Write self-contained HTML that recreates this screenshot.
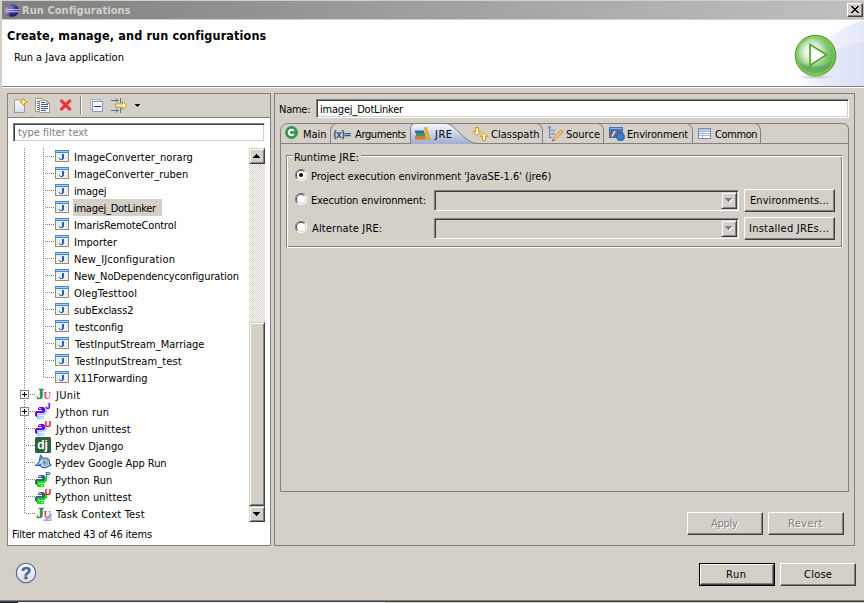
<!DOCTYPE html>
<html><head><meta charset="utf-8"><title>Run Configurations</title>
<style>
*{box-sizing:border-box;margin:0;padding:0}
html,body{width:864px;height:603px;overflow:hidden}
body{background:#d4d0c8;font-family:"DejaVu Sans Condensed","Liberation Sans",sans-serif;font-size:11px;color:#000;position:relative;line-height:13px}
.a{position:absolute}
.t{position:absolute;white-space:nowrap;line-height:13px;height:13px}
#titlebar{left:2px;top:1px;width:862px;height:18px;background:linear-gradient(to right,#808080,#c0c0c0)}
#closebtn{left:847px;top:3px;width:16px;height:14px;background:#d4d0c8;border:1px solid;border-color:#fff #404040 #404040 #fff;box-shadow:inset -1px -1px 0 #808080}
#header{left:2px;top:19px;width:862px;height:67px;background:#fff;overflow:hidden}
#hsep1{left:2px;top:86px;width:862px;height:1px;background:#808080}
#hsep2{left:2px;top:87px;width:862px;height:1px;background:#fff}
.panel{border:1px solid #808080}
#lp{left:7px;top:93px;width:264px;height:453px;background:#fff}
#ltb{left:8px;top:94px;width:262px;height:23px;background:#d4d0c8}
#ltbline{left:8px;top:117px;width:262px;height:1px;background:#808080}
#rp{left:274px;top:93px;width:581px;height:453px}
.sunken{border:1px solid;border-color:#808080 #fff #fff #808080;box-shadow:inset 1px 1px 0 #404040,inset -1px -1px 0 #d4d0c8}
.btn{position:absolute;background:#d4d0c8;border:1px solid;border-color:#fff #404040 #404040 #fff;box-shadow:inset -1px -1px 0 #808080;text-align:center;line-height:19px;white-space:nowrap}
.hl{position:absolute;height:1px;background-image:linear-gradient(to right,#808080 50%,transparent 50%);background-size:2px 1px}
.vl{position:absolute;width:1px;background-image:linear-gradient(to bottom,#808080 50%,transparent 50%);background-size:1px 2px}
</style></head><body>
<!-- title bar -->
<div class="a" id="titlebar"></div>
<svg class="a" style="left:5px;top:4px" width="14" height="13" viewBox="0 0 14 13"><defs><radialGradient id="eg" cx="0.38" cy="0.28" r="0.8"><stop offset="0" stop-color="#8c80cc"/><stop offset="0.55" stop-color="#2e2c84"/><stop offset="1" stop-color="#18165c"/></radialGradient><linearGradient id="ep" x1="0" y1="0" x2="1" y2="0"><stop offset="0" stop-color="#e8a0dc" stop-opacity=".95"/><stop offset="0.22" stop-color="#c078c4" stop-opacity=".6"/><stop offset="0.4" stop-color="#c078c4" stop-opacity="0"/></linearGradient></defs><ellipse cx="7" cy="6.500" rx="7" ry="6.300" fill="url(#eg)"/><ellipse cx="7" cy="6.500" rx="7" ry="6.300" fill="url(#ep)"/><rect x="1" y="5.200" width="13" height="1" fill="#c8d4f4"/><rect x="1" y="7.300" width="13" height="1" fill="#c8d4f4"/></svg>
<div class="a" id="closebtn"><svg class="a" style="left:3px;top:2px" width="8" height="7" viewBox="0 0 8 7" shape-rendering="crispEdges"><path d="M0 0h2v1h1v1h2v-1h1v-1h2v1h-1v1h-1v1h-1v1h1v1h1v1h1v1h-2v-1h-1v-1h-2v1h-1v1h-2v-1h1v-1h1v-1h1v-1h-1v-1h-1v-1h-1z" fill="#000"/></svg></div>
<!-- header -->
<div class="a" id="header">
<svg class="a" style="left:0;top:0" width="862" height="67" viewBox="2 19 862 67"><defs>
<linearGradient id="bg1" gradientUnits="userSpaceOnUse" x1="795" y1="0" x2="864" y2="0"><stop offset="0" stop-color="#fff"/><stop offset="1" stop-color="#e3e8f8"/></linearGradient>
<linearGradient id="bg2" gradientUnits="userSpaceOnUse" x1="800" y1="0" x2="864" y2="0"><stop offset="0" stop-color="#dce2f5" stop-opacity="0"/><stop offset="0.500" stop-color="#dce2f5" stop-opacity=".55"/><stop offset="1" stop-color="#dce2f5" stop-opacity="1"/></linearGradient>
<radialGradient id="pl1" gradientUnits="userSpaceOnUse" cx="812" cy="52" r="24"><stop offset="0" stop-color="#ffffff"/><stop offset="0.300" stop-color="#e4f4dc"/><stop offset="0.650" stop-color="#86c878"/><stop offset="1" stop-color="#5cae48"/></radialGradient>
<linearGradient id="pl2" x1="0" y1="0" x2="0" y2="1"><stop offset="0" stop-color="#6aa86a" stop-opacity="0"/><stop offset="0.500" stop-color="#4e9a5a" stop-opacity=".55"/><stop offset="1" stop-color="#7ccc4c" stop-opacity=".9"/></linearGradient>
<radialGradient id="sh" cx=".5" cy=".5" r=".5"><stop offset="0" stop-color="#b0a4b8" stop-opacity=".7"/><stop offset="1" stop-color="#b0a4b8" stop-opacity="0"/></radialGradient>
</defs>
<ellipse cx="890" cy="105" rx="92" ry="88.600" fill="url(#bg1)"/>
<ellipse cx="900" cy="120" rx="123.600" ry="81.500" fill="url(#bg2)"/>
<ellipse cx="815.500" cy="77" rx="20" ry="2.200" fill="url(#sh)"/>
<circle cx="815.500" cy="55.500" r="20.300" fill="url(#pl1)" stroke="#5f8a2c" stroke-width="1"/>
<path d="M797 58 A18.500 18.500 0 0 0 834 58 A20 14 0 0 1 797 58Z" fill="url(#pl2)"/>
<circle cx="815.500" cy="55.500" r="18.600" fill="none" stroke="#7fd050" stroke-width="1.600" opacity=".8"/>
<path d="M810 44.500 L826.500 54.800 L810 65.500 Z" fill="#fff" stroke="#4ea626" stroke-width="1.700" stroke-linejoin="miter"/>
</svg>
</div>
<div class="a" style="left:2px;top:19px;width:862px;height:1px;background:#d4d0c8"></div><div class="a" id="hsep1"></div><div class="a" id="hsep2"></div>
<div class="t" style="left:22px;top:4px;letter-spacing:0.059px;font-weight:bold;color:#d4d0c8;">Run Configurations</div>
<div class="t" style="left:7px;top:29px;letter-spacing:0.143px;font-weight:bold;font-size:12.5px;">Create, manage, and run configurations</div>
<div class="t" style="left:14px;top:51px;">Run a Java application</div>
<!-- panels -->
<div class="a panel" id="lp"></div>
<div class="a" id="ltb"></div><div class="a" id="ltbline"></div>
<div class="a panel" id="rp"></div>
<svg class="a" style="left:14px;top:98px" width="14" height="15" viewBox="0 0 14 15"><defs><linearGradient id="pg" x1="0" y1="0" x2="0" y2="1"><stop offset="0" stop-color="#fff"/><stop offset="1" stop-color="#d2e0f6"/></linearGradient></defs><path d="M0.500 2h7l3 3v9.500h-10z" fill="url(#pg)" stroke="#a69a7a"/><path d="M9.500 0.300l1.300 2.400 2.400 1.300-2.400 1.300-1.300 2.400-1.300-2.400-2.400-1.300 2.400-1.300z" fill="#e8b830" stroke="#c8960c" stroke-width=".8"/><path d="M9.500 2v4M7.500 4h4" stroke="#fffbe0" stroke-width="1"/></svg>
<svg class="a" style="left:35px;top:98px" width="16" height="15" viewBox="0 0 16 15"><path d="M0.500 0.500h7l2 2v11h-9z" fill="#f4f8fe" stroke="#a69a7a"/><path d="M2 3.500h3M2 5.500h2M2 7.500h2M2 9.500h2M2 11.500h2" stroke="#5070b0"/><path d="M4.500 2.500h7l3 3v9h-10z" fill="#fafcff" stroke="#a69a7a"/><path d="M11.500 2.500v3h3z" fill="#ecdcaa" stroke="#a69a7a" stroke-linejoin="round"/><path d="M6 4.500h4M6 6.500h7M6 8.500h7M6 10.500h7M6 12.500h5" stroke="#3c5c9c"/></svg>
<svg class="a" style="left:59px;top:98px" width="14" height="14" viewBox="0 0 14 14"><path d="M2.600 3 L10.600 11 M10.600 3 L2.600 11" stroke="#f0a4a8" stroke-width="4.400" stroke-linecap="round" fill="none"/><path d="M2.600 3 L10.600 11 M10.600 3 L2.600 11" stroke="#e6323e" stroke-width="3" stroke-linecap="round" fill="none"/></svg>
<div class="a" style="left:80px;top:96px;width:1px;height:18px;background:#808080"></div><div class="a" style="left:81px;top:96px;width:1px;height:18px;background:#fff"></div>
<svg class="a" style="left:90px;top:99px" width="14" height="13" viewBox="0 0 14 13" shape-rendering="crispEdges"><rect x="0.500" y="0.500" width="10" height="10" fill="#dbe8fa" stroke="#a4b4d8"/><rect x="2.500" y="2.500" width="10" height="10" fill="#f2f8ff" stroke="#8c98c4"/><rect x="4" y="7" width="7" height="1" fill="#10408c"/></svg>
<svg class="a" style="left:111px;top:98px" width="17" height="16" viewBox="0 0 17 16"><path d="M0 2.500h7M5 0.500l2 2-2 2M9.500 0v5" stroke="#4a6e9e" fill="none"/><path d="M0 12.500h7M5 10.500l2 2-2 2M9.500 10v5" stroke="#4a6e9e" fill="none"/><path d="M4.500 6h7v-2.500l4.500 4-4.500 4v-2.500h-7z" fill="#fff6c8" stroke="#d0900c" stroke-linejoin="round"/></svg>
<svg class="a" style="left:135px;top:104px" width="5" height="3" viewBox="0 0 5 3" shape-rendering="crispEdges"><path d="M0 0h5v1h-1v1h-1v1h-1v-1h-1v-1h-1z"/></svg>
<div class="a sunken" style="left:13px;top:123px;width:252px;height:19px;background:#fff"></div>
<div class="t" style="left:18px;top:126px;letter-spacing:-0.067px;color:#808080;">type filter text</div>
<div class="vl" style="left:24px;top:148px;height:366px"></div>
<div class="vl" style="left:43px;top:148px;height:230px"></div>
<div class="hl" style="left:45px;top:156px;width:10px"></div>
<svg class="a" style="left:55px;top:150px" width="14" height="12" viewBox="0 0 14 12" shape-rendering="crispEdges"><rect width="14" height="12" fill="#9c8a68"/><rect x="1" y="3" width="12" height="8" fill="#e6f0fb"/><rect width="14" height="3" fill="#4a86cc"/><rect x="1" y="1" width="12" height="1" fill="#a9cdf3"/><path d="M7 4h2v5h-1v1h-3v-1h-1v-1h1v1h2z" fill="#2a62b0"/></svg>
<div class="t" style="left:74px;top:151px;letter-spacing:0.05px;">ImageConverter_norarg</div>
<div class="hl" style="left:45px;top:173px;width:10px"></div>
<svg class="a" style="left:55px;top:167px" width="14" height="12" viewBox="0 0 14 12" shape-rendering="crispEdges"><rect width="14" height="12" fill="#9c8a68"/><rect x="1" y="3" width="12" height="8" fill="#e6f0fb"/><rect width="14" height="3" fill="#4a86cc"/><rect x="1" y="1" width="12" height="1" fill="#a9cdf3"/><path d="M7 4h2v5h-1v1h-3v-1h-1v-1h1v1h2z" fill="#2a62b0"/></svg>
<div class="t" style="left:74px;top:168px;">ImageConverter_ruben</div>
<div class="hl" style="left:45px;top:190px;width:10px"></div>
<svg class="a" style="left:55px;top:184px" width="14" height="12" viewBox="0 0 14 12" shape-rendering="crispEdges"><rect width="14" height="12" fill="#9c8a68"/><rect x="1" y="3" width="12" height="8" fill="#e6f0fb"/><rect width="14" height="3" fill="#4a86cc"/><rect x="1" y="1" width="12" height="1" fill="#a9cdf3"/><path d="M7 4h2v5h-1v1h-3v-1h-1v-1h1v1h2z" fill="#2a62b0"/></svg>
<div class="t" style="left:74px;top:185px;letter-spacing:-0.2px;">imagej</div>
<div class="hl" style="left:45px;top:207px;width:10px"></div>
<svg class="a" style="left:55px;top:201px" width="14" height="12" viewBox="0 0 14 12" shape-rendering="crispEdges"><rect width="14" height="12" fill="#9c8a68"/><rect x="1" y="3" width="12" height="8" fill="#e6f0fb"/><rect width="14" height="3" fill="#4a86cc"/><rect x="1" y="1" width="12" height="1" fill="#a9cdf3"/><path d="M7 4h2v5h-1v1h-3v-1h-1v-1h1v1h2z" fill="#2a62b0"/></svg>
<div class="a" style="left:73px;top:199px;width:89px;height:17px;background:#d4d0c8"></div>
<div class="t" style="left:74px;top:202px;letter-spacing:-0.267px;">imagej_DotLinker</div>
<div class="hl" style="left:45px;top:224px;width:10px"></div>
<svg class="a" style="left:55px;top:218px" width="14" height="12" viewBox="0 0 14 12" shape-rendering="crispEdges"><rect width="14" height="12" fill="#9c8a68"/><rect x="1" y="3" width="12" height="8" fill="#e6f0fb"/><rect width="14" height="3" fill="#4a86cc"/><rect x="1" y="1" width="12" height="1" fill="#a9cdf3"/><path d="M7 4h2v5h-1v1h-3v-1h-1v-1h1v1h2z" fill="#2a62b0"/></svg>
<div class="t" style="left:74px;top:219px;letter-spacing:-0.111px;">ImarisRemoteControl</div>
<div class="hl" style="left:45px;top:241px;width:10px"></div>
<svg class="a" style="left:55px;top:235px" width="14" height="12" viewBox="0 0 14 12" shape-rendering="crispEdges"><rect width="14" height="12" fill="#9c8a68"/><rect x="1" y="3" width="12" height="8" fill="#e6f0fb"/><rect width="14" height="3" fill="#4a86cc"/><rect x="1" y="1" width="12" height="1" fill="#a9cdf3"/><path d="M7 4h2v5h-1v1h-3v-1h-1v-1h1v1h2z" fill="#2a62b0"/></svg>
<div class="t" style="left:74px;top:236px;">Importer</div>
<div class="hl" style="left:45px;top:258px;width:10px"></div>
<svg class="a" style="left:55px;top:252px" width="14" height="12" viewBox="0 0 14 12" shape-rendering="crispEdges"><rect width="14" height="12" fill="#9c8a68"/><rect x="1" y="3" width="12" height="8" fill="#e6f0fb"/><rect width="14" height="3" fill="#4a86cc"/><rect x="1" y="1" width="12" height="1" fill="#a9cdf3"/><path d="M7 4h2v5h-1v1h-3v-1h-1v-1h1v1h2z" fill="#2a62b0"/></svg>
<div class="t" style="left:74px;top:253px;letter-spacing:0.167px;">New_IJconfiguration</div>
<div class="hl" style="left:45px;top:275px;width:10px"></div>
<svg class="a" style="left:55px;top:269px" width="14" height="12" viewBox="0 0 14 12" shape-rendering="crispEdges"><rect width="14" height="12" fill="#9c8a68"/><rect x="1" y="3" width="12" height="8" fill="#e6f0fb"/><rect width="14" height="3" fill="#4a86cc"/><rect x="1" y="1" width="12" height="1" fill="#a9cdf3"/><path d="M7 4h2v5h-1v1h-3v-1h-1v-1h1v1h2z" fill="#2a62b0"/></svg>
<div class="t" style="left:74px;top:270px;letter-spacing:-0.107px;">New_NoDependencyconfiguration</div>
<div class="hl" style="left:45px;top:292px;width:10px"></div>
<svg class="a" style="left:55px;top:286px" width="14" height="12" viewBox="0 0 14 12" shape-rendering="crispEdges"><rect width="14" height="12" fill="#9c8a68"/><rect x="1" y="3" width="12" height="8" fill="#e6f0fb"/><rect width="14" height="3" fill="#4a86cc"/><rect x="1" y="1" width="12" height="1" fill="#a9cdf3"/><path d="M7 4h2v5h-1v1h-3v-1h-1v-1h1v1h2z" fill="#2a62b0"/></svg>
<div class="t" style="left:74px;top:287px;letter-spacing:0.182px;">OlegTesttool</div>
<div class="hl" style="left:45px;top:309px;width:10px"></div>
<svg class="a" style="left:55px;top:303px" width="14" height="12" viewBox="0 0 14 12" shape-rendering="crispEdges"><rect width="14" height="12" fill="#9c8a68"/><rect x="1" y="3" width="12" height="8" fill="#e6f0fb"/><rect width="14" height="3" fill="#4a86cc"/><rect x="1" y="1" width="12" height="1" fill="#a9cdf3"/><path d="M7 4h2v5h-1v1h-3v-1h-1v-1h1v1h2z" fill="#2a62b0"/></svg>
<div class="t" style="left:74px;top:304px;letter-spacing:-0.1px;">subExclass2</div>
<div class="hl" style="left:45px;top:326px;width:10px"></div>
<svg class="a" style="left:55px;top:320px" width="14" height="12" viewBox="0 0 14 12" shape-rendering="crispEdges"><rect width="14" height="12" fill="#9c8a68"/><rect x="1" y="3" width="12" height="8" fill="#e6f0fb"/><rect width="14" height="3" fill="#4a86cc"/><rect x="1" y="1" width="12" height="1" fill="#a9cdf3"/><path d="M7 4h2v5h-1v1h-3v-1h-1v-1h1v1h2z" fill="#2a62b0"/></svg>
<div class="t" style="left:75px;top:321px;letter-spacing:-0.111px;">testconfig</div>
<div class="hl" style="left:45px;top:343px;width:10px"></div>
<svg class="a" style="left:55px;top:337px" width="14" height="12" viewBox="0 0 14 12" shape-rendering="crispEdges"><rect width="14" height="12" fill="#9c8a68"/><rect x="1" y="3" width="12" height="8" fill="#e6f0fb"/><rect width="14" height="3" fill="#4a86cc"/><rect x="1" y="1" width="12" height="1" fill="#a9cdf3"/><path d="M7 4h2v5h-1v1h-3v-1h-1v-1h1v1h2z" fill="#2a62b0"/></svg>
<div class="t" style="left:75px;top:338px;">TestInputStream_Marriage</div>
<div class="hl" style="left:45px;top:360px;width:10px"></div>
<svg class="a" style="left:55px;top:354px" width="14" height="12" viewBox="0 0 14 12" shape-rendering="crispEdges"><rect width="14" height="12" fill="#9c8a68"/><rect x="1" y="3" width="12" height="8" fill="#e6f0fb"/><rect width="14" height="3" fill="#4a86cc"/><rect x="1" y="1" width="12" height="1" fill="#a9cdf3"/><path d="M7 4h2v5h-1v1h-3v-1h-1v-1h1v1h2z" fill="#2a62b0"/></svg>
<div class="t" style="left:75px;top:355px;letter-spacing:0.105px;">TestInputStream_test</div>
<div class="hl" style="left:45px;top:377px;width:10px"></div>
<svg class="a" style="left:55px;top:371px" width="14" height="12" viewBox="0 0 14 12" shape-rendering="crispEdges"><rect width="14" height="12" fill="#9c8a68"/><rect x="1" y="3" width="12" height="8" fill="#e6f0fb"/><rect width="14" height="3" fill="#4a86cc"/><rect x="1" y="1" width="12" height="1" fill="#a9cdf3"/><path d="M7 4h2v5h-1v1h-3v-1h-1v-1h1v1h2z" fill="#2a62b0"/></svg>
<div class="t" style="left:74px;top:372px;letter-spacing:-0.083px;">X11Forwarding</div>
<div class="hl" style="left:30px;top:394px;width:5px"></div>
<svg class="a" style="left:20px;top:390px" width="9" height="9" viewBox="0 0 9 9" shape-rendering="crispEdges"><rect x="0.500" y="0.500" width="8" height="8" fill="#fff" stroke="#808080"/><path d="M2 4.500h5M4.500 2v5" stroke="#000"/></svg>
<svg class="a" style="left:35px;top:387px" width="17" height="16" viewBox="0 0 17 16"><text x="1.200" y="11.600" font-family="Liberation Serif,serif" font-weight="bold" font-size="15.500" stroke="#2a8a55" stroke-width=".4" fill="#2a8a55">J</text><text x="8.600" y="11.600" font-family="Liberation Serif,serif" font-weight="bold" font-size="10.500" fill="#d84a5a">U</text></svg>
<div class="t" style="left:56px;top:389px;letter-spacing:0.25px;">JUnit</div>
<div class="hl" style="left:30px;top:411px;width:5px"></div>
<svg class="a" style="left:20px;top:407px" width="9" height="9" viewBox="0 0 9 9" shape-rendering="crispEdges"><rect x="0.500" y="0.500" width="8" height="8" fill="#fff" stroke="#808080"/><path d="M2 4.500h5M4.500 2v5" stroke="#000"/></svg>
<svg class="a" style="left:35px;top:403px" width="17" height="16" viewBox="0 0 17 16"><g transform="translate(0,4)" shape-rendering="crispEdges"><path d="M10 2h2v1h-2zM10 3h2v1h-2zM10 4h2v1h-2zM9 5h3v1h-3zM2 6h9v1h-9zM2 7h8v1h-8zM2 8h2v1h-2zM2 9h7v1h-7zM2 10h7v1h-7zM2 11h7v1h-7z" fill="#a8d4ff"/><path d="M4 0h5v1h-5zM3 1h7v1h-7zM3 2h7v1h-7zM7 3h3v1h-3zM1 4h9v1h-9zM0 5h9v1h-9zM0 6h2v1h-2zM0 7h2v1h-2zM0 8h2v1h-2zM1 9h1v1h-1z" fill="#6a00ff"/><rect x="4" y="1" width="2" height="1" fill="#fff" opacity=".85"/><rect x="6" y="10" width="2" height="1" fill="#fff" opacity=".85"/></g><text x="12.900" y="6.400" font-family="Liberation Mono,monospace" font-weight="bold" font-size="10.500" text-anchor="middle" fill="#6a00ff">J</text></svg>
<div class="t" style="left:56px;top:406px;letter-spacing:0.222px;">Jython run</div>
<div class="hl" style="left:26px;top:428px;width:9px"></div>
<svg class="a" style="left:35px;top:420px" width="17" height="16" viewBox="0 0 17 16"><g transform="translate(0,4)" shape-rendering="crispEdges"><path d="M10 2h2v1h-2zM10 3h2v1h-2zM10 4h2v1h-2zM9 5h3v1h-3zM2 6h9v1h-9zM2 7h8v1h-8zM2 8h2v1h-2zM2 9h7v1h-7zM2 10h7v1h-7zM2 11h7v1h-7z" fill="#a8d4ff"/><path d="M4 0h5v1h-5zM3 1h7v1h-7zM3 2h7v1h-7zM7 3h3v1h-3zM1 4h9v1h-9zM0 5h9v1h-9zM0 6h2v1h-2zM0 7h2v1h-2zM0 8h2v1h-2zM1 9h1v1h-1z" fill="#6a00ff"/><rect x="4" y="1" width="2" height="1" fill="#fff" opacity=".85"/><rect x="6" y="10" width="2" height="1" fill="#fff" opacity=".85"/></g><text x="12.900" y="6.600" font-family="Liberation Sans,sans-serif" font-weight="bold" font-size="9" text-anchor="middle" fill="#ff0000">U</text></svg>
<div class="t" style="left:56px;top:423px;letter-spacing:0.143px;">Jython unittest</div>
<div class="hl" style="left:26px;top:445px;width:9px"></div>
<svg class="a" style="left:35px;top:437px" width="16" height="16" viewBox="0 0 16 16"><rect width="16" height="16" rx="1.500" fill="#2f5f3f"/><text x="7.600" y="11.600" text-anchor="middle" font-family="Liberation Sans,sans-serif" font-weight="bold" font-size="12" fill="#fff">dj</text></svg>
<div class="t" style="left:55px;top:440px;">Pydev Django</div>
<div class="hl" style="left:26px;top:462px;width:9px"></div>
<svg class="a" style="left:35px;top:454px" width="17" height="16" viewBox="0 0 17 16"><path d="M5.500 1.200 L8 4.200 Q12.500 3.200 14.200 6 L14.600 9.600 L16 11.200 L14 11.800 Q11 14.600 7 13.200 L5.600 11.600 L0.600 11.400 L4 8.400 Z" fill="#cfd8e4" stroke="#1c5fb8" stroke-width="1.100" stroke-linejoin="round"/><path d="M5.400 1.600 L7.600 4.600 L4.600 7.600Z" fill="#4a90e0"/><ellipse cx="10.400" cy="8.200" rx="2.600" ry="3.400" fill="#b8c0cc" stroke="#8a94a4" stroke-width=".8"/><ellipse cx="9.600" cy="8.600" rx=".9" ry="1.500" fill="#2a74d8"/><path d="M1.400 11.200 L6.400 9.600 L5.800 11.400Z" fill="#2a6ccc"/></svg>
<div class="t" style="left:55px;top:457px;letter-spacing:-0.053px;">Pydev Google App Run</div>
<div class="hl" style="left:26px;top:479px;width:9px"></div>
<svg class="a" style="left:35px;top:471px" width="17" height="16" viewBox="0 0 17 16"><g transform="translate(0,4)" shape-rendering="crispEdges"><path d="M10 2h2v1h-2zM10 3h2v1h-2zM10 4h2v1h-2zM9 5h3v1h-3zM2 6h9v1h-9zM2 7h8v1h-8zM2 8h2v1h-2zM2 9h7v1h-7zM2 10h7v1h-7zM2 11h7v1h-7z" fill="#00e800"/><path d="M4 0h5v1h-5zM3 1h7v1h-7zM3 2h7v1h-7zM7 3h3v1h-3zM1 4h9v1h-9zM0 5h9v1h-9zM0 6h2v1h-2zM0 7h2v1h-2zM0 8h2v1h-2zM1 9h1v1h-1z" fill="#40608c"/><rect x="4" y="1" width="2" height="1" fill="#fff" opacity=".85"/><rect x="6" y="10" width="2" height="1" fill="#fff" opacity=".85"/></g><text x="12.900" y="5.800" font-family="Liberation Sans,sans-serif" font-weight="bold" font-size="8" text-anchor="middle" fill="#008080">P</text></svg>
<div class="t" style="left:55px;top:474px;letter-spacing:0.111px;">Python Run</div>
<div class="hl" style="left:26px;top:496px;width:9px"></div>
<svg class="a" style="left:35px;top:488px" width="17" height="16" viewBox="0 0 17 16"><g transform="translate(0,4)" shape-rendering="crispEdges"><path d="M10 2h2v1h-2zM10 3h2v1h-2zM10 4h2v1h-2zM9 5h3v1h-3zM2 6h9v1h-9zM2 7h8v1h-8zM2 8h2v1h-2zM2 9h7v1h-7zM2 10h7v1h-7zM2 11h7v1h-7z" fill="#00e800"/><path d="M4 0h5v1h-5zM3 1h7v1h-7zM3 2h7v1h-7zM7 3h3v1h-3zM1 4h9v1h-9zM0 5h9v1h-9zM0 6h2v1h-2zM0 7h2v1h-2zM0 8h2v1h-2zM1 9h1v1h-1z" fill="#40608c"/><rect x="4" y="1" width="2" height="1" fill="#fff" opacity=".85"/><rect x="6" y="10" width="2" height="1" fill="#fff" opacity=".85"/></g><text x="12.900" y="6.600" font-family="Liberation Sans,sans-serif" font-weight="bold" font-size="9" text-anchor="middle" fill="#ff0000">U</text></svg>
<div class="t" style="left:55px;top:491px;letter-spacing:0.071px;">Python unittest</div>
<div class="hl" style="left:26px;top:513px;width:9px"></div>
<svg class="a" style="left:35px;top:506px" width="17" height="16" viewBox="0 0 17 16"><text x="1.200" y="11.600" font-family="Liberation Serif,serif" font-weight="bold" font-size="15.500" stroke="#2a8a55" stroke-width=".4" fill="#2a8a55">J</text><text x="8.600" y="11.600" font-family="Liberation Serif,serif" font-weight="bold" font-size="10.500" fill="#d84a5a">U</text><path d="M16.500 6.500V15H8Z" fill="#9a98cc" opacity=".9"/><path d="M15.500 10.500V14H12Z" fill="#d4d4ee" opacity=".9"/></svg>
<div class="t" style="left:56px;top:508px;letter-spacing:0.188px;">Task Context Test</div>
<div class="a" style="left:249px;top:148px;width:16px;height:374px;background-color:#fff;background-image:linear-gradient(45deg,#d4d0c8 25%,transparent 25%,transparent 75%,#d4d0c8 75%),linear-gradient(45deg,#d4d0c8 25%,transparent 25%,transparent 75%,#d4d0c8 75%);background-size:2px 2px;background-position:0 0,1px 1px"></div>
<div class="a" style="left:249px;top:148px;width:16px;height:16px;background:#d4d0c8;border:1px solid;border-color:#d4d0c8 #404040 #404040 #d4d0c8;box-shadow:inset 1px 1px 0 #fff,inset -1px -1px 0 #808080"><svg class="a" style="left:3px;top:5px" width="7" height="4" viewBox="0 0 7 4" shape-rendering="crispEdges"><path d="M3 0h1v1h1v1h1v1h1v1h-7v-1h1v-1h1v-1h1z"/></svg></div>
<div class="a" style="left:249px;top:322px;width:16px;height:184px;background:#d4d0c8;border:1px solid;border-color:#d4d0c8 #404040 #404040 #d4d0c8;box-shadow:inset 1px 1px 0 #fff,inset -1px -1px 0 #808080"></div>
<div class="a" style="left:249px;top:506px;width:16px;height:16px;background:#d4d0c8;border:1px solid;border-color:#d4d0c8 #404040 #404040 #d4d0c8;box-shadow:inset 1px 1px 0 #fff,inset -1px -1px 0 #808080"><svg class="a" style="left:3px;top:5px" width="7" height="4" viewBox="0 0 7 4" shape-rendering="crispEdges"><path d="M0 0h7v1h-1v1h-1v1h-1v1h-1v-1h-1v-1h-1v-1h-1z"/></svg></div>
<div class="t" style="left:12px;top:528px;letter-spacing:-0.214px;">Filter matched 43 of 46 items</div>
<div class="t" style="left:279px;top:103px;letter-spacing:-0.25px;">Name:</div>
<div class="a sunken" style="left:316px;top:99px;width:533px;height:19px;background:#fff"></div>
<div class="t" style="left:320px;top:103px;letter-spacing:-0.2px;">imagej_DotLinker</div>
<svg class="a" style="left:280px;top:122px" width="572" height="372" viewBox="0 0 572 372"><defs><linearGradient id="seltab" x1="0" y1="0" x2="0" y2="1"><stop offset="0" stop-color="#f6f8fc"/><stop offset="1" stop-color="#9eacd3"/></linearGradient></defs>
<path d="M0.500 369.500V10 Q0.500 1.500 9 1.500 H562 Q568.500 1.500 568.500 8 V369.500 Z" fill="none" stroke="#808080"/>
<path d="M0.500 21.500H568.500" stroke="#808080"/>
<path d="M130.500 22 V7 Q130.500 1.500 136 1.500 H166 C175 1.500 185 21.500 197 21.500 V22 Z" fill="url(#seltab)" stroke="none"/>
<path d="M130.500 21.500 V7 Q130.500 1.500 136 1.500 H166 C175 1.500 185 21.500 197 21.500" fill="none" stroke="#808080"/>
<path d="M56.5 1.500 Q50.5 2.500 50.5 9 V21 M256.5 1.500 Q262.5 2.500 262.5 9 V21 M317.5 1.500 Q323.5 2.500 323.5 9 V21 M406.5 1.500 Q412.5 2.500 412.5 9 V21 M474.5 1.500 Q480.5 2.500 480.5 9 V21" fill="none" stroke="#808080"/>
</svg>
<svg class="a" style="left:285px;top:126px" width="13" height="13" viewBox="0 0 13 13"><circle cx="6.500" cy="6.500" r="6.400" fill="#3a9650"/><circle cx="6.500" cy="6.500" r="5.300" fill="none" stroke="#2c8444" stroke-width=".6"/><path d="M8.700 4.900 A2.700 2.700 0 1 0 8.700 8.100" fill="none" stroke="#fff" stroke-width="2.100"/></svg>
<div class="t" style="left:333px;top:128px;letter-spacing:-1.0px;font-weight:bold;font-size:10px;color:#3a5486;">(x)=</div>
<svg class="a" style="left:414px;top:127px" width="17" height="13" viewBox="0 0 17 13"><rect x="1" y="3.500" width="9" height="2.500" fill="#2a6ab8"/><rect x="2" y="6" width="9" height="3" fill="#3a9a60"/><rect x="1" y="9" width="10.500" height="3.600" fill="#d8783a"/><path d="M10.500 0.800 L12.500 0.300 L16 12.500 H12.500Z" fill="#f0b820" stroke="#c88a10" stroke-width=".5"/></svg>
<svg class="a" style="left:472px;top:126px" width="17" height="16" viewBox="0 0 17 16"><path d="M3.500 1.500h3v4h2.200l-3.700 4-3.700-4h2.200z" fill="#fff4b0" stroke="#c89a18" stroke-linejoin="round"/><path d="M10.500 14.500h3v-4h2.200l-3.700-4-3.700 4h2.200z" fill="#fff4b0" stroke="#c89a18" stroke-linejoin="round"/></svg>
<svg class="a" style="left:547px;top:126px" width="17" height="16" viewBox="0 0 17 16"><path d="M2.500 1v10.500h3M2.500 4.500h3M2.500 8h3" fill="none" stroke="#6a8ac8"/><rect x="1" y="0.500" width="3" height="2" fill="#6a8ac8"/><rect x="5" y="3.500" width="3" height="2" fill="#8aa4d8"/><rect x="5" y="7" width="3" height="2" fill="#8aa4d8"/><path d="M14 4 L16 6 L8 14 L5.500 15 L6.300 12Z" fill="#f4c878" stroke="#b88a38" stroke-width=".8" stroke-linejoin="round"/><path d="M5.500 15l.6-1.800 1.200 1.200z" fill="#303060"/></svg>
<svg class="a" style="left:609px;top:127px" width="16" height="14" viewBox="0 0 16 14"><rect x="0" y="0" width="14" height="11" fill="#5a6a8c"/><rect x="0" y="0" width="14" height="3" fill="#3a76c8"/><rect x="1" y="1" width="12" height="1" fill="#8ab4ec"/><path d="M3 9.500 L6 4" stroke="#fff" stroke-width="1.300"/><circle cx="11.500" cy="9.800" r="4" fill="#3a7ad0" stroke="#2458a8" stroke-width=".8"/></svg>
<svg class="a" style="left:698px;top:128px" width="13" height="11" viewBox="0 0 13 11" shape-rendering="crispEdges"><rect x="0.500" y="0.500" width="12" height="10" fill="#fff" stroke="#7888b8"/><rect x="1" y="1" width="11" height="2" fill="#c0cce8"/><path d="M1 3.500h11M1 5.500h11M1 7.500h11M4.500 1v9" stroke="#a8b4d8" fill="none"/></svg>
<div class="t" style="left:303px;top:128px;">Main</div>
<div class="t" style="left:355px;top:128px;letter-spacing:-0.375px;">Arguments</div>
<div class="t" style="left:435px;top:128px;letter-spacing:0.5px;">JRE</div>
<div class="t" style="left:491px;top:128px;">Classpath</div>
<div class="t" style="left:566px;top:128px;">Source</div>
<div class="t" style="left:627px;top:128px;letter-spacing:-0.2px;">Environment</div>
<div class="t" style="left:715px;top:128px;letter-spacing:-0.4px;">Common</div>
<div class="a" style="left:286px;top:155px;width:557px;height:93px;border:1px solid;border-color:#808080 #fff #fff #808080;box-shadow:inset 1px 1px 0 #fff,inset -1px -1px 0 #808080"></div>
<div class="a" style="left:293px;top:153px;width:68px;height:6px;background:#d4d0c8"></div>
<div class="t" style="left:294px;top:151px;letter-spacing:0.091px;">Runtime JRE:</div>
<svg class="a" style="left:295px;top:169px" width="12" height="12" viewBox="0 0 12 12"><circle cx="6" cy="6" r="5.500" fill="#fff"/><path d="M10 2 A5.500 5.500 0 0 0 2 10" fill="none" stroke="#808080"/><path d="M2 10 A5.500 5.500 0 0 0 10 2" fill="none" stroke="#fff"/><path d="M9.300 2.700 A4.500 4.500 0 0 0 2.700 9.300" fill="none" stroke="#404040"/><path d="M2.700 9.300 A4.500 4.500 0 0 0 9.300 2.700" fill="none" stroke="#d4d0c8"/><circle cx="6" cy="6" r="2" fill="#000"/></svg>
<svg class="a" style="left:295px;top:193px" width="12" height="12" viewBox="0 0 12 12"><circle cx="6" cy="6" r="5.500" fill="#fff"/><path d="M10 2 A5.500 5.500 0 0 0 2 10" fill="none" stroke="#808080"/><path d="M2 10 A5.500 5.500 0 0 0 10 2" fill="none" stroke="#fff"/><path d="M9.300 2.700 A4.500 4.500 0 0 0 2.700 9.300" fill="none" stroke="#404040"/><path d="M2.700 9.300 A4.500 4.500 0 0 0 9.300 2.700" fill="none" stroke="#d4d0c8"/></svg>
<svg class="a" style="left:295px;top:221px" width="12" height="12" viewBox="0 0 12 12"><circle cx="6" cy="6" r="5.500" fill="#fff"/><path d="M10 2 A5.500 5.500 0 0 0 2 10" fill="none" stroke="#808080"/><path d="M2 10 A5.500 5.500 0 0 0 10 2" fill="none" stroke="#fff"/><path d="M9.300 2.700 A4.500 4.500 0 0 0 2.700 9.300" fill="none" stroke="#404040"/><path d="M2.700 9.300 A4.500 4.500 0 0 0 9.300 2.700" fill="none" stroke="#d4d0c8"/></svg>
<div class="t" style="left:311px;top:170px;letter-spacing:-0.042px;">Project execution environment 'JavaSE-1.6' (jre6)</div>
<div class="t" style="left:311px;top:194px;letter-spacing:-0.143px;">Execution environment:</div>
<div class="t" style="left:312px;top:222px;letter-spacing:0.154px;">Alternate JRE:</div>
<div class="a sunken" style="left:434px;top:190px;width:305px;height:21px;background:#d4d0c8"></div><div class="a" style="left:721px;top:192px;width:16px;height:17px;background:#d4d0c8;border:1px solid;border-color:#d4d0c8 #404040 #404040 #d4d0c8;box-shadow:inset 1px 1px 0 #fff,inset -1px -1px 0 #808080"><svg class="a" style="left:3px;top:5px" width="8" height="5" viewBox="0 0 8 5" shape-rendering="crispEdges"><path d="M1 1h7v1h-1v1h-1v1h-1v1h-1v-1h-1v-1h-1v-1h-1z" fill="#fff"/><path d="M0 0h7v1h-1v1h-1v1h-1v1h-1v-1h-1v-1h-1v-1h-1z" fill="#808080"/></svg></div>
<div class="a sunken" style="left:434px;top:218px;width:305px;height:21px;background:#d4d0c8"></div><div class="a" style="left:721px;top:220px;width:16px;height:17px;background:#d4d0c8;border:1px solid;border-color:#d4d0c8 #404040 #404040 #d4d0c8;box-shadow:inset 1px 1px 0 #fff,inset -1px -1px 0 #808080"><svg class="a" style="left:3px;top:5px" width="8" height="5" viewBox="0 0 8 5" shape-rendering="crispEdges"><path d="M1 1h7v1h-1v1h-1v1h-1v1h-1v-1h-1v-1h-1v-1h-1z" fill="#fff"/><path d="M0 0h7v1h-1v1h-1v1h-1v1h-1v-1h-1v-1h-1v-1h-1z" fill="#808080"/></svg></div>
<div class="btn" style="left:744px;top:189px;width:91px;height:23px"></div><div class="t" style="left:750px;top:194px;letter-spacing:0.071px;">Environments...</div>
<div class="btn" style="left:744px;top:217px;width:91px;height:23px"></div><div class="t" style="left:749px;top:222px;letter-spacing:0.25px;">Installed JREs...</div>
<div class="btn" style="left:687px;top:512px;width:76px;height:23px"></div><div class="t" style="left:711px;top:517px;letter-spacing:-0.25px;color:#808080;text-shadow:1px 1px 0 #fff;">Apply</div>
<div class="btn" style="left:768px;top:512px;width:76px;height:23px"></div><div class="t" style="left:788px;top:517px;letter-spacing:0.4px;color:#808080;text-shadow:1px 1px 0 #fff;">Revert</div>
<div class="a" style="left:699px;top:563px;width:76px;height:23px;background:#000"></div><div class="btn" style="left:700px;top:564px;width:74px;height:21px"></div><div class="t" style="left:726px;top:568px;letter-spacing:0.5px;">Run</div>
<div class="btn" style="left:780px;top:563px;width:76px;height:23px"></div><div class="t" style="left:804px;top:568px;letter-spacing:0.25px;">Close</div>
<svg class="a" style="left:15px;top:562px" width="22" height="22" viewBox="0 0 22 22"><defs><linearGradient id="hg" x1="0" y1="0" x2="0" y2="1"><stop offset="0" stop-color="#ffffff"/><stop offset="1" stop-color="#d4d8e2"/></linearGradient></defs><circle cx="11" cy="11" r="9.700" fill="url(#hg)" stroke="#4a6492" stroke-width="1.100"/><text x="11.100" y="17.200" text-anchor="middle" font-family="Liberation Sans,sans-serif" font-weight="bold" font-size="17" fill="#4a6492" stroke="#4a6492" stroke-width=".5">?</text></svg>
<div class="a" style="left:0;top:600px;width:864px;height:1px;background:#808080"></div><div class="a" style="left:0;top:601px;width:864px;height:1px;background:#404040"></div>
<div class="a" style="left:0;top:602px;width:864px;height:1px;background:linear-gradient(to right,#181828 0,#181828 18px,#f4f4f4 18px,#f4f4f4 385px,#d4d0c8 385px)"></div>
</body></html>
